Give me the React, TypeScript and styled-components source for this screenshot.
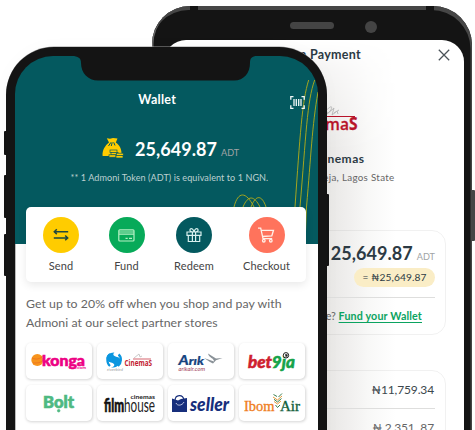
import React from "react";
import styled, { createGlobalStyle } from "styled-components";

const teal = "#04595f";
const frame = "#141414";

const GlobalStyle = createGlobalStyle`
  * { box-sizing: border-box; }
  html, body { margin: 0; overflow: hidden; background: #fff; }
  body { font-family: Lato, "Noto Sans", sans-serif; }
  svg { display: block; flex: none; }
`;

const Stage = styled.main`
  position: relative;
  width: 475px;
  height: 430px;
  overflow: hidden;
  background: #fff;
`;

/* Rear handset */

const RearPhone = styled.section`
  position: absolute;
  left: 152px;
  top: 6px;
  width: 320px;
  height: 460px;
  padding-right: 8px;
  padding-left: 12px;
  border-radius: 38px 39px 0 0;
  background: ${frame};
  box-shadow: inset -1.5px 4px 0 #464646, inset 1.5px 0 0 #666;
`;

const Antenna = styled.i<{ $x: number }>`
  position: absolute;
  top: 0;
  left: ${(p) => p.$x}px;
  width: 8px;
  height: 5px;
  background: ${frame};
`;

const Sensors = styled.div`
  height: 33.5px;
  display: flex;
  align-items: center;
  padding: 8px 0 0 126px;
  gap: 30.5px;
`;

const Speaker = styled.i`
  width: 44px;
  height: 6.5px;
  margin-top: -3px;
  border-radius: 4px;
  background: #444;
`;

const Camera = styled.i`
  width: 12.5px;
  height: 12.5px;
  border-radius: 50%;
  background: #444;
`;

const RearScreen = styled.div`
  position: relative;
  height: 430px;
  border-radius: 22px 22px 0 0;
  overflow: hidden;
  background: #fff;
  color: #2c3a44;
  display: flex;
  flex-direction: column;
  align-items: flex-end;
  padding-right: 18px;
`;

const CastShadow = styled.i`
  position: absolute;
  inset: 0;
  background: linear-gradient(90deg, #e8e7e5 163px, #efeeed 182px, #f8f8f7 204px, #fff 232px);
  mask-image: linear-gradient(180deg, transparent 0, rgba(0, 0, 0, 0.4) 30px, #000 110px);
`;

const TopBar = styled.div`
  position: relative;
  display: flex;
  align-items: center;
  gap: 77px;
  margin-top: 7px;
  margin-right: -4px;
  height: 16px;
`;

const ScreenTitle = styled.h2`
  margin: 0;
  font-size: 12.5px;
  line-height: 16px;
  font-weight: 700;
  letter-spacing: 0.28px;
  white-space: nowrap;
`;

const MerchantLogo = styled.div`
  position: relative;
  margin: 42px 88px 0 0;
`;

const MerchantName = styled.div`
  position: relative;
  margin: 16.5px 81.5px 0 0;
  font-size: 12px;
  line-height: 16px;
  font-weight: 700;
  letter-spacing: 0.5px;
`;

const MerchantPlace = styled.div`
  position: relative;
  margin: 3px 51.5px 0 0;
  font-size: 9.8px;
  line-height: 14px;
  letter-spacing: 0.3px;
  color: #666;
`;

const Panel = styled.div<{ $top: number; $height: number }>`
  position: relative;
  flex: none;
  width: 280px;
  height: ${(p) => p.$height}px;
  margin-top: ${(p) => p.$top}px;
  padding: 0 10px;
  border: 1px solid rgba(120, 120, 120, 0.1);
  border-radius: 14px;
  display: flex;
  flex-direction: column;
  align-items: flex-end;
`;

const Balance = styled.div<{ $top: number }>`
  display: flex;
  align-items: baseline;
  gap: 4px;
  margin-top: ${(p) => p.$top}px;
  height: 24px;
`;

const Amount = styled.span`
  font-size: 18px;
  line-height: 24px;
  font-weight: 700;
  letter-spacing: 0.05px;
`;

const Unit = styled.span`
  font-size: 9.1px;
  letter-spacing: 0;
  color: #a0a4a6;
`;

const Pill = styled.div`
  height: 19px;
  width: 81px;
  margin-top: 3px;
  border-radius: 10px;
  background: #faedc6;
  text-align: center;
  font-size: 10.2px;
  line-height: 18px;
  letter-spacing: 0.1px;
`;

const Rule = styled.hr<{ $top: number }>`
  flex: none;
  width: 100%;
  height: 1px;
  margin: ${(p) => p.$top}px 0 0;
  border: 0;
  background: #dededd;
`;

const FundLine = styled.div`
  margin: 10px 13px 0 0;
  font-size: 10.7px;
  line-height: 16px;
  color: #666;
  a {
    color: #0ba360;
    font-weight: 700;
    text-decoration: underline;
    text-underline-offset: 2px;
    letter-spacing: 0.15px;
  }
`;

const Price = styled.div<{ $top: number; $muted?: boolean }>`
  margin: ${(p) => p.$top}px 1px 0 0;
  font-size: 12px;
  line-height: 16px;
  white-space: pre;
  letter-spacing: -0.13px;
  color: ${(p) => (p.$muted ? "#666" : "#3c474d")};
`;

/* Front handset */

const SideKey = styled.i<{ $x: number; $y: number; $h: number; $c?: string }>`
  position: absolute;
  left: ${(p) => p.$x}px;
  top: ${(p) => p.$y}px;
  width: 4px;
  height: ${(p) => p.$h}px;
  border-radius: 1px;
  background: ${(p) => p.$c ?? frame};
`;

const FrontPhone = styled.section`
  position: absolute;
  left: 5.5px;
  top: 46.5px;
  width: 321.5px;
  height: 420px;
  padding: 9.5px 9.5px 0;
  border-radius: 48px 48px 0 0;
  background: ${frame};
  box-shadow: 0 -0.5px 0 #999, 0 0 18px rgba(0, 0, 0, 0.025);
`;

const FrontScreen = styled.div`
  position: relative;
  height: 410px;
  border-radius: 38px 38px 0 0;
  overflow: hidden;
  background: linear-gradient(${teal} 188px, transparent 188px), linear-gradient(90deg, #bbb 1px, #fff 1px);
`;

const Notch = styled.svg`
  position: absolute;
  top: -1px;
  left: 57px;
`;

const Swirls = styled.svg`
  position: absolute;
  top: 0;
  left: 0;
`;

const TitleRow = styled.div`
  position: relative;
  display: flex;
  align-items: center;
  justify-content: space-between;
  padding: 0 12.5px 0 123.3px;
  margin-top: 35px;
  height: 17px;
  color: #fff;
`;

const ScanSlot = styled.span`
  margin-top: 5px;
`;

const WalletBalance = styled.div`
  position: relative;
  display: flex;
  gap: 11px;
  padding-left: 87px;
  margin-top: 29px;
  color: #fff;
`;

const TokenNote = styled.p`
  position: relative;
  margin: 11px 0 0 55.5px;
  font-size: 9.1px;
  line-height: 12px;
  letter-spacing: 0.06px;
  color: #bdd0d1;
  white-space: nowrap;
`;

const Actions = styled.div`
  position: relative;
  display: grid;
  grid-template-columns: 66px 65px 70px 75px;
  margin: 23px 11.5px 0 11px;
  padding: 10px 2px 0 2px;
  height: 75px;
  border-radius: 5px;
  background: #fff;
  box-shadow: 0 3px 9px rgba(0, 0, 0, 0.09);
`;

const Action = styled.div`
  display: flex;
  flex-direction: column;
  align-items: center;
  gap: 4.5px;
  font-size: 11px;
  line-height: 15px;
  letter-spacing: 0.1px;
  color: #444;
`;

const Disc = styled.span<{ $color: string }>`
  display: grid;
  place-items: center;
  width: 36px;
  height: 36px;
  border-radius: 50%;
  background: ${(p) => p.$color};
`;

const Promo = styled.p`
  margin: 12px 11px 0;
  font-size: 12.3px;
  line-height: 19px;
  letter-spacing: 0.05px;
  color: #666;
  white-space: nowrap;
`;

const Partners = styled.div`
  display: grid;
  grid-template-columns: repeat(4, 65.5px);
  grid-auto-rows: 36px;
  gap: 5.5px;
  margin: 11px 0 0 11px;
`;

const Tile = styled.div`
  border-radius: 5px;
  background: #fff;
  box-shadow: 0.5px 1px 3px rgba(0, 0, 0, 0.17);
`;

const sans = 'Lato, "Noto Sans", sans-serif';

const CinemasLogo = () => (
  <svg width="66" height="30" viewBox="0 0 66 30">
    <path d="M31 8C38 2 41-1 39 5L34 10 42 3 40 10 45 6 46 9M29 11 36 7M42 8 47 5" fill="none" stroke="#bbb" strokeWidth="1" />
    <path d="M24 11.5H63" stroke="#b8142a" strokeWidth="1.2" />
    <text x="0" y="25" textLength="65.5" lengthAdjust="spacingAndGlyphs" fill="#b8142a" stroke="#b8142a" strokeWidth=".3" fontFamily='"Open Sans", sans-serif' fontWeight="600" fontSize="17">
      Cinema<tspan fontWeight="700">S</tspan>
    </text>
  </svg>
);

const MoneyBag = () => (
  <svg width="22" height="22" viewBox="0 0 22 22" fill="#fc0">
    <path d="M4.8 1.3 8 1.8 11 1 15.5 1.4 13.8 5.5C17.5 8 20 12 19.6 19H.6C0 13.5 3 8.5 7 5.5Z" />
    <path d="M6.5 9 9 5.3M9.3 9 10.2 5.3M13 8.5 11.7 5.3" stroke={teal} fill="none" />
    <g stroke={teal} strokeWidth=".7">
      <rect x="8" y="13" width="7" height="2.4" /><rect x="9" y="15.4" width="7" height="2.4" />
      <rect x="7" y="17.8" width="7" height="2.4" /><rect x="14.3" y="16.2" width="7" height="2.4" /><rect x="14" y="18.6" width="7" height="2.4" />
    </g>
  </svg>
);

const ScanIcon = () => (
  <svg width="15" height="13" viewBox="0 0 15 13" fill="none" stroke="#f2f8f8" strokeWidth="1.3">
    <path d="M3.5.7H.8V3.8M11.5.7h2.7V3.8M3.5 12.3H.8V9.2M11.5 12.3h2.7V9.2M4 3V10M6.3 3V10M8.7 3V10M11 3V10" />
  </svg>
);

const SendIcon = () => (
  <svg width="16" height="14" viewBox="0 0 16 14" fill="none" stroke="#20483f" strokeWidth="1.5">
    <path d="M15.2 3.7H1.8M3.8 1.3 1.3 3.7 3.8 6.1M.8 9.9H14.2M12.2 7.5 14.7 9.9 12.2 12.3" />
  </svg>
);

const CardIcon = () => (
  <svg width="17" height="13" viewBox="0 0 17 13" fill="none" stroke="#b5f0c4" strokeWidth="1.2">
    <rect x=".8" y=".8" width="15.2" height="11.2" rx="1" />
    <path d="M1 3H16M1 5.2H16M7.5 9.3H9.7M11 9.3H14" />
  </svg>
);

const GiftIcon = () => (
  <svg width="16" height="16" viewBox="0 0 16 16" fill="none" stroke="#d8f0ee" strokeWidth="1.2">
    <path d="M1 5H15V8.3H1ZM2.3 8.3H13.7V14.5H2.3ZM6.4 5V14.5M9.6 5V14.5M8 5C4 5 3.4 3.4 4.2 2.2 5.3.7 7.6 2 8 5 8.4 2 10.7.7 11.8 2.2 12.6 3.4 12 5 8 5" />
  </svg>
);

const CartIcon = () => (
  <svg width="17" height="16" viewBox="0 0 17 16" fill="none" stroke="#fff0e8" strokeWidth="1.3">
    <path d="M0 1.2H2.7L5 11.7H14.2M3.3 3.3H15.5L13.8 8.8 4.5 9.5" />
    <circle cx="5.8" cy="13.7" r="1.3" /><circle cx="12.8" cy="13.7" r="1.3" />
  </svg>
);

const CloseIcon = () => (
  <svg width="12" height="12" viewBox="0 0 12 12" stroke="#4a5258" strokeWidth="1.25">
    <path d="M.8.8 11.2 11.2M11.2.8.8 11.2" />
  </svg>
);

const Logo = ({ children }: { children: React.ReactNode }) => (
  <svg width="65.5" height="36" viewBox="0 0 65.5 36">{children}</svg>
);

const logos: React.ReactNode[] = [
  <Logo key="konga">
    <circle cx="11.3" cy="17" r="6" fill="#f7941d" />
    <path d="M6 15C10 17 14 16 17 13M7 20C11 20 15 20 17 17" fill="none" stroke="#ea6a20" strokeWidth=".7" />
    <text x="16" y="23" textLength="43" lengthAdjust="spacingAndGlyphs" fill="#ed0284" stroke="#ed0284" strokeWidth=".6" fontFamily={sans} fontWeight="900" fontSize="15.5">konga</text>
    <text x="50" y="26" textLength="10" fill="#ed0284" fontFamily={sans} fontWeight="700" fontSize="4.5">.com</text>
  </Logo>,
  <Logo key="cinemas">
    <path d="M17.5 9.5C8 9 7 18.5 14 19.5 19 20.5 18 24 13.5 24.5 24 25.5 27 15.5 20 14 16 13 15.5 11 17.5 9.5Z" fill="#0b96df" />
    <path d="M13 11C9.5 14 9.5 20 13 23M21.5 11.5C25 14 24.5 20 21 23" stroke="#0b96df" strokeWidth="2.2" fill="none" />
    <path d="M37 15 42 11 43 14 45 13" fill="none" stroke="#bbb" strokeWidth=".8" />
    <path d="M36 16H54" stroke="#c3202f" strokeWidth=".7" />
    <text x="27.5" y="23.3" textLength="27.5" lengthAdjust="spacingAndGlyphs" fill="#c3202f" fontFamily='"Open Sans", sans-serif' fontWeight="700" fontSize="8.3">CinemaS</text>
    <text x="10" y="28.3" textLength="16" lengthAdjust="spacingAndGlyphs" fill="#999" fontFamily={sans} fontStyle="italic" fontSize="4.5">riverbird</text>
  </Logo>,
  <Logo key="arik">
    <text x="10.5" y="22" textLength="25.5" lengthAdjust="spacingAndGlyphs" fill="#17447f" stroke="#17447f" strokeWidth=".2" fontFamily={sans} fontWeight="900" fontStyle="italic" fontSize="12.5">
      A<tspan fontSize="11">rık</tspan>
    </text>
    <path d="M36 15 46 18.5C46 15 41 15 40 10.5L48 15.5 54.5 15 48 17.3 45 20.5 42 19Z" fill="#8a9298" />
    <text x="10.5" y="27.6" textLength="26.5" lengthAdjust="spacingAndGlyphs" fill="#a23a55" fontFamily={sans} fontStyle="italic" fontSize="5.5">arikair.com</text>
  </Logo>,
  <Logo key="bet9ja">
    <text x="9" y="25" textLength="47" lengthAdjust="spacingAndGlyphs" fontFamily={sans} fontWeight="900" fontStyle="italic" fontSize="17" strokeWidth=".5">
      <tspan fill="#cf202f" stroke="#cf202f">bet</tspan><tspan fill="#16a34a" stroke="#16a34a">9ja</tspan>
    </text>
    <circle cx="47" cy="12.3" r="2.7" fill="#fff" stroke="#222" strokeWidth="1" />
    <path d="M46 11.2h2.4l.3 2-2 .8Z" fill="#222" />
  </Logo>,
  <Logo key="bolt">
    <g fill="#4fb982" stroke="#4fb982" strokeWidth=".7">
      <text x="17" y="22.5" textLength="31" lengthAdjust="spacingAndGlyphs" fontFamily={sans} fontWeight="900" fontSize="17">Bolt</text>
      <circle cx="32.7" cy="25.7" r="1.3" />
    </g>
  </Logo>,
  <Logo key="filmhouse">
    <text x="7" y="26.5" textLength="51" lengthAdjust="spacingAndGlyphs" fontFamily={sans} fontSize="18.5">
      <tspan fill="#111" stroke="#111" strokeWidth=".6" fontWeight="900">film</tspan><tspan fill="#222">house</tspan>
    </text>
    <text x="33.5" y="13.6" textLength="24.5" lengthAdjust="spacingAndGlyphs" fill="#222" fontFamily={sans} fontWeight="700" fontSize="6">cinemas</text>
  </Logo>,
  <Logo key="seller">
    <path d="M4 13.5 10 15.5 13 14 19 13V27H4Z" fill="#172f7c" />
    <path d="M7 16C7 9 15 9 16 15" fill="none" stroke="#172f7c" strokeWidth="1.1" />
    <path d="M8 18C9 21 14 21 16 17" fill="none" stroke="#dfe4f5" strokeWidth=".8" />
    <text x="22" y="26" textLength="39" lengthAdjust="spacingAndGlyphs" fill="#172f7c" fontFamily={sans} fontWeight="900" fontStyle="italic" fontSize="19">seller</text>
  </Logo>,
  <Logo key="ibom">
    <g fontFamily='"Liberation Serif", serif' fontSize="15.5" strokeWidth=".35">
      <text x="5" y="26" textLength="30.5" lengthAdjust="spacingAndGlyphs" fill="#ef7d22" stroke="#ef7d22">Ibom</text>
      <text x="41" y="26" textLength="20" lengthAdjust="spacingAndGlyphs" fill="#12603c" stroke="#12603c">Air</text>
    </g>
    <g fill="none" strokeWidth="1">
      <path d="M34 12 38.5 15 43 11M35 16.5 38.5 19 42 16" stroke="#e89a3b" />
      <path d="M34.5 9.5 38 11.5M39.5 12 43 8.5M36.5 20 38.5 22.5 41 20M35 14.3 38.5 17 42.5 13.5" stroke="#397e4e" />
    </g>
  </Logo>,
];

const actions = [
  { label: "Send", color: "#fc0", icon: <SendIcon /> },
  { label: "Fund", color: "#07aa59", icon: <CardIcon /> },
  { label: "Redeem", color: teal, icon: <GiftIcon /> },
  { label: "Checkout", color: "#ff735c", icon: <CartIcon /> },
];

export default function App() {
  return (
    <Stage>
      <GlobalStyle />
      <SideKey $x={471} $y={190} $h={51} $c="#444" />
      <RearPhone>
        <Antenna $x={38} />
        <Antenna $x={274} />
        <Sensors><Speaker /><Camera /></Sensors>
        <RearScreen>
          <CastShadow />
          <TopBar><ScreenTitle>Token Payment</ScreenTitle><CloseIcon /></TopBar>
          <MerchantLogo><CinemasLogo /></MerchantLogo>
          <MerchantName>Cinemas</MerchantName>
          <MerchantPlace>Ikeja, Lagos State</MerchantPlace>
          <Panel $top={45.5} $height={105}>
            <Balance $top={10.5}><Amount>25,649.87</Amount><Unit>ADT</Unit></Balance>
            <Pill>= ₦25,649.87</Pill>
            <Rule $top={10} />
            <FundLine>Low balance? <a>Fund your Wallet</a></FundLine>
          </Panel>
          <Panel $top={35} $height={130}>
            <Price $top={11}>₦11,759.34</Price>
            <Rule $top={10} />
            <Price $top={11} $muted>₦ 2,351. 87</Price>
          </Panel>
        </RearScreen>
      </RearPhone>

      <SideKey $x={4} $y={131} $h={24} />
      <SideKey $x={4} $y={175} $h={43} />
      <SideKey $x={4} $y={234} $h={42} />
      <SideKey $x={325} $y={194} $h={72} />
      <FrontPhone>
        <FrontScreen>
          <Swirls width="303" height="188" fill="none" stroke="#a5a51f" strokeWidth="1">
            <path d="M293.7 24C287 45 285 80 280 151M299.7 24C292 45 291 80 285 151M303 36C297 70 296 100 291.5 151L290 188M219 151C223 135 231 135 239 151M228 151C233 139 239 139 245 151M236 151C241 138 247 139 251 151" />
          </Swirls>
          <Notch width="188" height="27" viewBox="0 0 188 27">
            <path d="M0 0V1C6 1 9 3 9 8 9 18 16 25.5 26 25.5H162C172 25.5 178 18 178 8 178 3 180 1 185 1V0Z" fill={frame} />
          </Notch>
          <TitleRow>
            <ScreenTitle as="h1">Wallet</ScreenTitle>
            <ScanSlot><ScanIcon /></ScanSlot>
          </TitleRow>
          <WalletBalance>
            <MoneyBag />
            <Balance $top={0}><Amount>25,649.87</Amount><Unit>ADT</Unit></Balance>
          </WalletBalance>
          <TokenNote>** 1 Admoni Token (ADT) is equivalent to 1 NGN.</TokenNote>
          <Actions>
            {actions.map((a) => (
              <Action key={a.label}><Disc $color={a.color}>{a.icon}</Disc>{a.label}</Action>
            ))}
          </Actions>
          <Promo>Get up to 20% off when you shop and pay with<br />Admoni at our select partner stores</Promo>
          <Partners>{logos.map((logo, i) => <Tile key={i}>{logo}</Tile>)}</Partners>
        </FrontScreen>
      </FrontPhone>
    </Stage>
  );
}
